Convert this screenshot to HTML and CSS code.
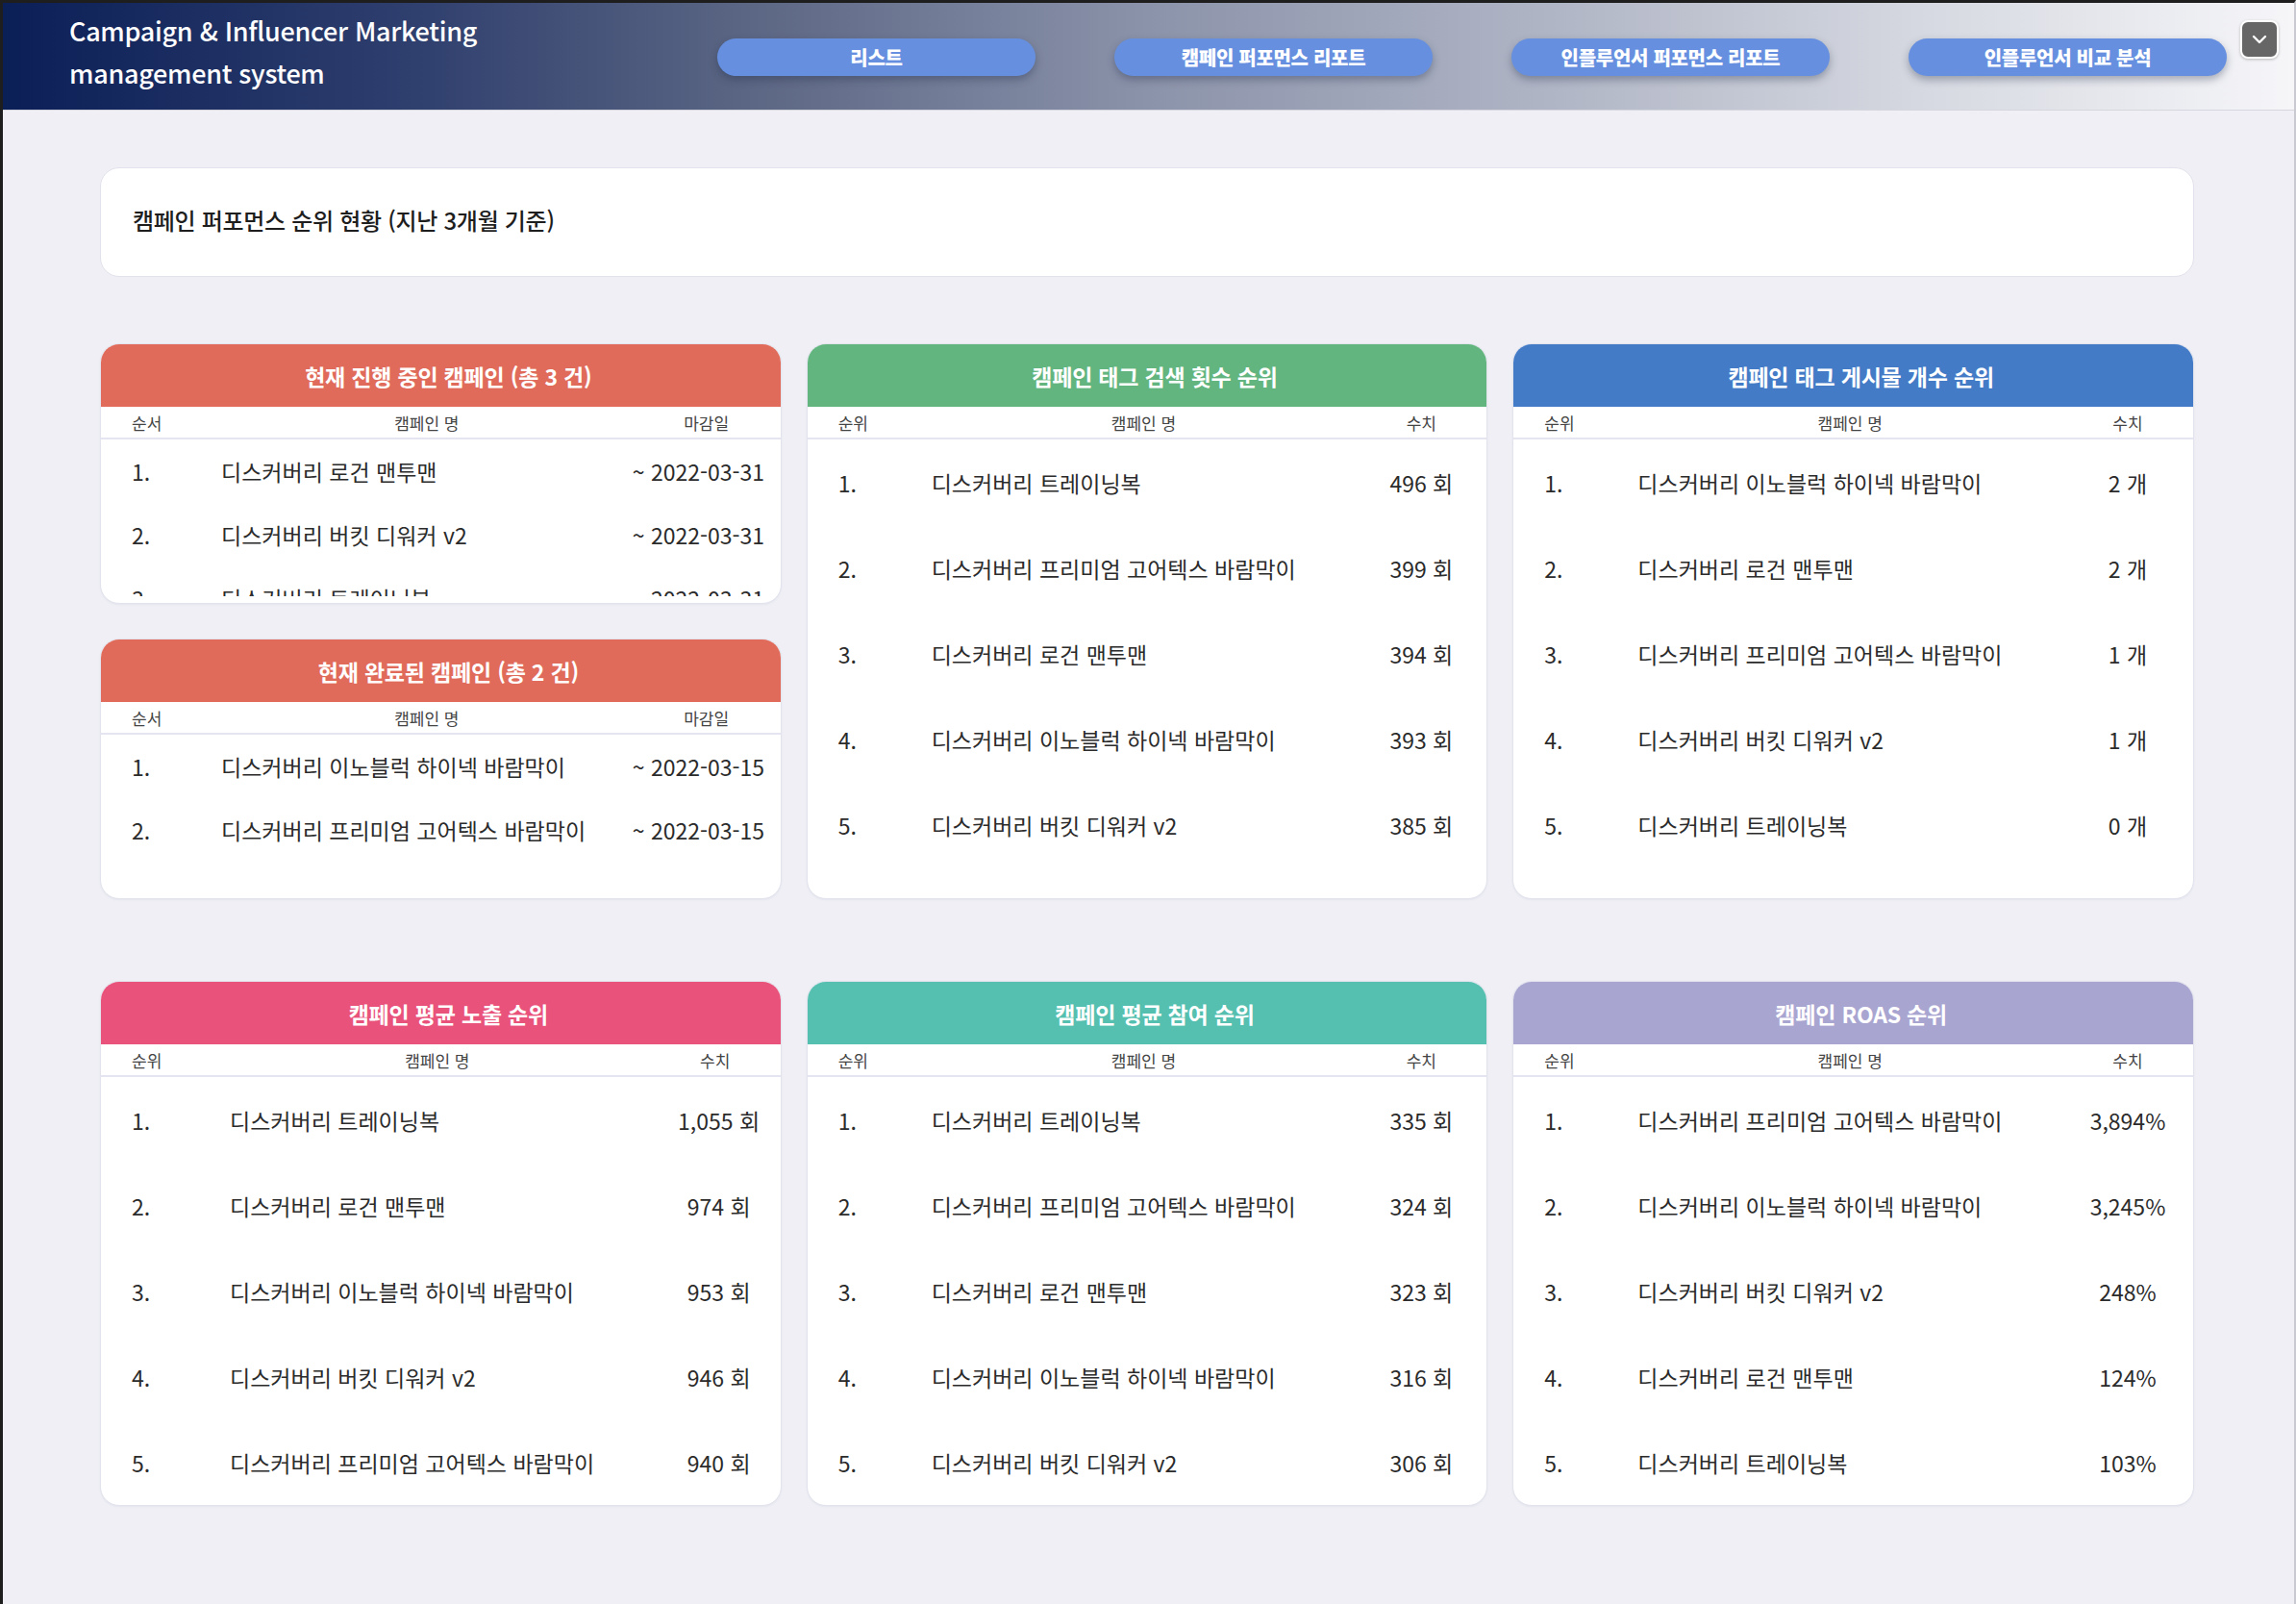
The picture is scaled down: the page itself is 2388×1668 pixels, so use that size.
FILE: index.html
```html
<!DOCTYPE html>
<html lang="ko">
<head>
<meta charset="utf-8">
<title>Campaign & Influencer Marketing management system</title>
<link rel="stylesheet" href="styles.css">
</head>
<body>
<div class="app">
  <header class="topbar">
    <div class="brand">Campaign &amp; Influencer Marketing<br>management system</div>
    <nav class="nav">
      <a class="nav-btn">리스트</a>
      <a class="nav-btn">캠페인 퍼포먼스 리포트</a>
      <a class="nav-btn">인플루언서 퍼포먼스 리포트</a>
      <a class="nav-btn">인플루언서 비교 분석</a>
    </nav>
    <button class="menu-toggle" aria-label="menu">
      <svg width="16" height="10" viewBox="0 0 16 10"><path d="M2 2 L8 8 L14 2" fill="none" stroke="#fff" stroke-width="2.4" stroke-linecap="round" stroke-linejoin="round"/></svg>
    </button>
  </header>

  <main class="main">
    <section class="summary-card">캠페인 퍼포먼스 순위 현황 (지난 3개월 기준)</section>

    <div class="grid grid-top">
      <div class="stack">
        <div class="card">
          <div class="card-head orange">현재 진행 중인 캠페인 (총 3 건)</div>
          <div class="cols date-cols"><span class="c-rank">순서</span><span class="c-name">캠페인 명</span><span class="c-val">마감일</span></div>
          <div class="scroll">
            <div class="row short date-cols"><span class="c-rank">1.</span><span class="c-name">디스커버리 로건 맨투맨</span><span class="c-date">~ 2022-03-31</span></div>
            <div class="row short date-cols"><span class="c-rank">2.</span><span class="c-name">디스커버리 버킷 디워커 v2</span><span class="c-date">~ 2022-03-31</span></div>
            <div class="row short date-cols"><span class="c-rank">3.</span><span class="c-name">디스커버리 트레이닝복</span><span class="c-date">~ 2022-03-31</span></div>
          </div>
        </div>
        <div class="card">
          <div class="card-head orange">현재 완료된 캠페인 (총 2 건)</div>
          <div class="cols date-cols"><span class="c-rank">순서</span><span class="c-name">캠페인 명</span><span class="c-val">마감일</span></div>
          <div class="scroll">
            <div class="row short date-cols"><span class="c-rank">1.</span><span class="c-name">디스커버리 이노블럭 하이넥 바람막이</span><span class="c-date">~ 2022-03-15</span></div>
            <div class="row short date-cols"><span class="c-rank">2.</span><span class="c-name">디스커버리 프리미엄 고어텍스 바람막이</span><span class="c-date">~ 2022-03-15</span></div>
          </div>
        </div>
      </div>

      <div class="card">
        <div class="card-head green">캠페인 태그 검색 횟수 순위</div>
        <div class="cols rank-cols"><span class="c-rank">순위</span><span class="c-name">캠페인 명</span><span class="c-val">수치</span></div>
        <div class="row rank-cols"><span class="c-rank">1.</span><span class="c-name">디스커버리 트레이닝복</span><span class="c-val">496 회</span></div>
        <div class="row rank-cols"><span class="c-rank">2.</span><span class="c-name">디스커버리 프리미엄 고어텍스 바람막이</span><span class="c-val">399 회</span></div>
        <div class="row rank-cols"><span class="c-rank">3.</span><span class="c-name">디스커버리 로건 맨투맨</span><span class="c-val">394 회</span></div>
        <div class="row rank-cols"><span class="c-rank">4.</span><span class="c-name">디스커버리 이노블럭 하이넥 바람막이</span><span class="c-val">393 회</span></div>
        <div class="row rank-cols"><span class="c-rank">5.</span><span class="c-name">디스커버리 버킷 디워커 v2</span><span class="c-val">385 회</span></div>
      </div>

      <div class="card">
        <div class="card-head blue">캠페인 태그 게시물 개수 순위</div>
        <div class="cols rank-cols"><span class="c-rank">순위</span><span class="c-name">캠페인 명</span><span class="c-val">수치</span></div>
        <div class="row rank-cols"><span class="c-rank">1.</span><span class="c-name">디스커버리 이노블럭 하이넥 바람막이</span><span class="c-val">2 개</span></div>
        <div class="row rank-cols"><span class="c-rank">2.</span><span class="c-name">디스커버리 로건 맨투맨</span><span class="c-val">2 개</span></div>
        <div class="row rank-cols"><span class="c-rank">3.</span><span class="c-name">디스커버리 프리미엄 고어텍스 바람막이</span><span class="c-val">1 개</span></div>
        <div class="row rank-cols"><span class="c-rank">4.</span><span class="c-name">디스커버리 버킷 디워커 v2</span><span class="c-val">1 개</span></div>
        <div class="row rank-cols"><span class="c-rank">5.</span><span class="c-name">디스커버리 트레이닝복</span><span class="c-val">0 개</span></div>
      </div>
    </div>

    <div class="grid grid-bottom">
      <div class="card">
        <div class="card-head pink">캠페인 평균 노출 순위</div>
        <div class="cols rank-cols"><span class="c-rank">순위</span><span class="c-name">캠페인 명</span><span class="c-val">수치</span></div>
        <div class="row rank-cols shift"><span class="c-rank">1.</span><span class="c-name wide">디스커버리 트레이닝복</span><span class="c-val">1,055 회</span></div>
        <div class="row rank-cols shift"><span class="c-rank">2.</span><span class="c-name wide">디스커버리 로건 맨투맨</span><span class="c-val">974 회</span></div>
        <div class="row rank-cols shift"><span class="c-rank">3.</span><span class="c-name wide">디스커버리 이노블럭 하이넥 바람막이</span><span class="c-val">953 회</span></div>
        <div class="row rank-cols shift"><span class="c-rank">4.</span><span class="c-name wide">디스커버리 버킷 디워커 v2</span><span class="c-val">946 회</span></div>
        <div class="row rank-cols shift"><span class="c-rank">5.</span><span class="c-name wide">디스커버리 프리미엄 고어텍스 바람막이</span><span class="c-val">940 회</span></div>
      </div>

      <div class="card">
        <div class="card-head teal">캠페인 평균 참여 순위</div>
        <div class="cols rank-cols"><span class="c-rank">순위</span><span class="c-name">캠페인 명</span><span class="c-val">수치</span></div>
        <div class="row rank-cols"><span class="c-rank">1.</span><span class="c-name">디스커버리 트레이닝복</span><span class="c-val">335 회</span></div>
        <div class="row rank-cols"><span class="c-rank">2.</span><span class="c-name">디스커버리 프리미엄 고어텍스 바람막이</span><span class="c-val">324 회</span></div>
        <div class="row rank-cols"><span class="c-rank">3.</span><span class="c-name">디스커버리 로건 맨투맨</span><span class="c-val">323 회</span></div>
        <div class="row rank-cols"><span class="c-rank">4.</span><span class="c-name">디스커버리 이노블럭 하이넥 바람막이</span><span class="c-val">316 회</span></div>
        <div class="row rank-cols"><span class="c-rank">5.</span><span class="c-name">디스커버리 버킷 디워커 v2</span><span class="c-val">306 회</span></div>
      </div>

      <div class="card">
        <div class="card-head lavender">캠페인 ROAS 순위</div>
        <div class="cols rank-cols"><span class="c-rank">순위</span><span class="c-name">캠페인 명</span><span class="c-val">수치</span></div>
        <div class="row rank-cols"><span class="c-rank">1.</span><span class="c-name">디스커버리 프리미엄 고어텍스 바람막이</span><span class="c-val">3,894%</span></div>
        <div class="row rank-cols"><span class="c-rank">2.</span><span class="c-name">디스커버리 이노블럭 하이넥 바람막이</span><span class="c-val">3,245%</span></div>
        <div class="row rank-cols"><span class="c-rank">3.</span><span class="c-name">디스커버리 버킷 디워커 v2</span><span class="c-val">248%</span></div>
        <div class="row rank-cols"><span class="c-rank">4.</span><span class="c-name">디스커버리 로건 맨투맨</span><span class="c-val">124%</span></div>
        <div class="row rank-cols"><span class="c-rank">5.</span><span class="c-name">디스커버리 트레이닝복</span><span class="c-val">103%</span></div>
      </div>
    </div>
  </main>
</div>
</body>
</html>
```

FILE: styles.css
```css
* { box-sizing: border-box; }

html, body {
  margin: 0;
  padding: 0;
  background: #efeff5;
}

body {
  font-family: "Noto Sans CJK KR", "Noto Sans", sans-serif;
  color: #2b2b2b;
  width: 2388px;
  height: 1668px;
  overflow: hidden;
}

.app {
  min-height: 1668px;
  border-top: 3px solid #1e1e1e;
  border-left: 3px solid #1e1e1e;
  border-right: 2px solid #c9c9d1;
  background: #efeff5;
}

/* ---------- top bar ---------- */
.topbar {
  height: 112px;
  display: flex;
  align-items: flex-start;
  padding-left: 69px;
  background: linear-gradient(90deg, #0b1f57 0%, #2f3f6e 18%, #5a6583 32%, #8b93aa 50%, #b1b6c6 68%, #d6d9e1 84%, #f6f6f9 100%);
  border-bottom: 1px solid #d5d6de;
}

.brand {
  width: 674px;
  color: #ffffff;
  font-size: 27px;
  font-weight: 500;
  line-height: 44px;
  padding-top: 7px;
  letter-spacing: -0.3px;
}

.nav {
  display: flex;
  gap: 82px;
  margin-top: 37px;
}

.nav-btn {
  width: 331px;
  height: 39px;
  border-radius: 20px;
  background: #6690df;
  color: #ffffff;
  font-size: 20px;
  font-weight: 800;
  display: flex;
  align-items: center;
  justify-content: center;
  box-shadow: 0 4px 8px rgba(30, 40, 70, 0.35);
  letter-spacing: -0.3px;
}

.menu-toggle {
  margin-left: 14px;
  margin-top: 18px;
  width: 40px;
  height: 40px;
  border-radius: 8px;
  border: 2px solid #ffffff;
  background: #666666;
  display: flex;
  align-items: center;
  justify-content: center;
  padding: 0;
  box-shadow: 0 1px 3px rgba(0, 0, 0, 0.25);
}

/* ---------- main ---------- */
.main {
  padding: 59px 0 0 101px;
}

.summary-card {
  width: 2178px;
  height: 114px;
  background: #ffffff;
  border: 1px solid #e2e2ec;
  border-radius: 20px;
  display: flex;
  align-items: center;
  padding-left: 33px;
  padding-bottom: 6px;
  font-size: 24px;
  font-weight: 500;
  color: #1e1e1e;
  letter-spacing: -0.3px;
}

.grid {
  width: 2178px;
  display: grid;
  grid-template-columns: repeat(3, 1fr);
  column-gap: 26px;
}

.grid-top { margin-top: 69px; }
.grid-bottom { margin-top: 85px; align-items: start; }

.stack {
  display: flex;
  flex-direction: column;
  gap: 36px;
}

.card {
  background: #ffffff;
  border: 1px solid #e3e3ee;
  border-radius: 20px;
  overflow: hidden;
  box-shadow: 0 1px 2px rgba(120, 120, 160, 0.08);
}

.card-head {
  height: 65px;
  display: flex;
  align-items: center;
  justify-content: center;
  padding-left: 16px;
  color: #ffffff;
  font-size: 23px;
  font-weight: 700;
  letter-spacing: -0.2px;
}

.orange   { background: #e06b5a; }
.green    { background: #63b57f; }
.blue     { background: #437bc7; }
.pink     { background: #e9527b; }
.teal     { background: #55bfb0; }
.lavender { background: #a9a5d1; }

.cols {
  height: 34px;
  border-bottom: 2px solid #e5e5f1;
  font-size: 17px;
  color: #444;
  align-items: center;
}

.cols .c-name { text-align: center; }

.date-cols {
  display: grid;
  grid-template-columns: 125px 1fr 154px;
  align-items: center;
}

.rank-cols {
  display: grid;
  grid-template-columns: 129px 1fr 136px;
  align-items: center;
}

.c-rank { padding-left: 32px; }
.c-val { text-align: center; white-space: nowrap; }
.c-date { text-align: right; padding-right: 25px; white-space: nowrap; }
.c-name { white-space: nowrap; }
.c-name.wide { padding-left: 5px; }
.shift .c-val { padding-left: 8px; }

.scroll {
  height: 163px;
  overflow: hidden;
  margin-bottom: 7px;
}

.row {
  height: 89px;
  font-size: 23px;
  color: #2b2b2b;
}

.row.short {
  height: 66px;
}
```
